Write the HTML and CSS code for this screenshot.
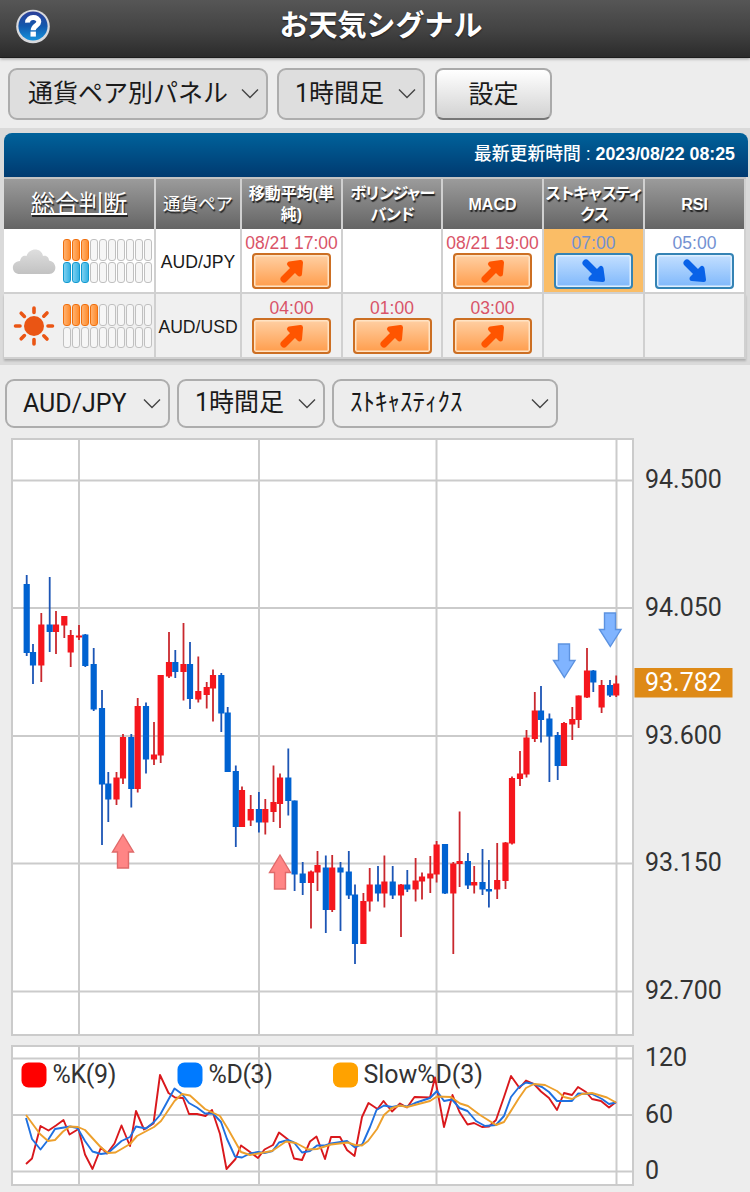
FILE: index.html
```
<!DOCTYPE html>
<html lang="ja">
<head>
    <meta charset="UTF-8">
    <meta name="viewport" content="width=device-width, initial-scale=1.0">
    <title>お天気シグナル</title>
    <link rel="stylesheet" href="styles.css">
</head>
<body>

    <!-- icons -->
    <svg class="defs" width="0" height="0">
        <defs>
            <linearGradient id="blueBall" x1="0" y1="0" x2="0" y2="1">
                <stop offset="0" stop-color="#2d3f98"/>
                <stop offset="0.5" stop-color="#1258ad"/>
                <stop offset="1" stop-color="#1693dc"/>
            </linearGradient>
            <linearGradient id="cloudFill" x1="0" y1="0" x2="0" y2="1">
                <stop offset="0" stop-color="#dedede"/>
                <stop offset="1" stop-color="#c2c2c2"/>
            </linearGradient>
            <symbol id="arrow" viewBox="0 0 24 24">
                <path d="M4 20 L15 9" fill="none" stroke="currentColor" stroke-width="7" stroke-linecap="round"/>
                <path d="M9.5 5 L20.5 3.5 L19.5 15 Z" fill="currentColor" stroke="currentColor" stroke-width="5" stroke-linejoin="round"/>
            </symbol>
        </defs>
    </svg>

    <header class="header">
        <svg class="help" width="36" height="36" viewBox="0 0 36 36">
            <circle cx="18" cy="18.5" r="16.8" fill="#d9dadd"/>
            <circle cx="18" cy="18" r="14.6" fill="url(#blueBall)"/>
            <path d="M12.6 14.6 C12.4 8 23.8 8 23.8 13.8 C23.8 17.4 18.2 17.6 18.2 22.2" fill="none" stroke="#fff" stroke-width="5"/>
            <rect x="15.5" y="23.6" width="5.4" height="5" fill="#fff"/>
        </svg>
        <h1>お天気シグナル</h1>
    </header>

    <div class="toolbar">
        <div class="select filled panel-type"><span>通貨ペア別パネル</span><svg class="chevron" viewBox="0 0 18 12"><path d="M1 1.5 L9 9.5 L17 1.5"/></svg></div>
        <div class="select filled period"><span>1時間足</span><svg class="chevron" viewBox="0 0 18 12"><path d="M1 1.5 L9 9.5 L17 1.5"/></svg></div>
        <button class="setting">設定</button>
    </div>

    <section class="panel">
        <div class="updated"><span>最新更新時間</span> : <b>2023/08/22 08:25</b></div>
        <div class="grid head">
            <div class="cell total">総合判断</div>
            <div class="cell pair-head">通貨ペア</div>
            <div class="cell">移動平均(単<br>純)</div>
            <div class="cell narrow">ボリンジャー<br>バンド</div>
            <div class="cell">MACD</div>
            <div class="cell narrow">ストキャスティ<br>クス</div>
            <div class="cell">RSI</div>
        </div>
        <div class="grid row">
            <div class="cell weather">
                <svg width="44" height="44" viewBox="0 0 44 44">
                    <path d="M8 35 C-1 35 -2 23 8 22 C9 17 12 16 14.5 17 C17 9 29 8 31 17 C35 16 37 19 37 21.5 C46 23 45 35 37 35 Z" fill="url(#cloudFill)"/>
                </svg>
                <div class="meter">
                    <div class="bars"><i class="up"></i><i class="up"></i><i class="up"></i><i></i><i></i><i></i><i></i><i></i><i></i><i></i></div>
                    <div class="bars"><i class="down"></i><i class="down"></i><i class="down"></i><i></i><i></i><i></i><i></i><i></i><i></i><i></i></div>
                </div>
            </div>
            <div class="cell pair">AUD/JPY</div>
            <div class="cell signal buy"><span>08/21 17:00</span><div class="sign"><svg><use href="#arrow"/></svg></div></div>
            <div class="cell"></div>
            <div class="cell signal buy"><span>08/21 19:00</span><div class="sign"><svg><use href="#arrow"/></svg></div></div>
            <div class="cell signal sell active"><span>07:00</span><div class="sign"><svg><use href="#arrow"/></svg></div></div>
            <div class="cell signal sell"><span>05:00</span><div class="sign"><svg><use href="#arrow"/></svg></div></div>
        </div>
        <div class="grid row even">
            <div class="cell weather">
                <svg width="44" height="44" viewBox="0 0 44 44">
                    <circle cx="22" cy="22" r="10" fill="#ea5514"/>
                    <path d="M22 4V8.5 M22 35.5V40 M3.5 22H8 M36 22H40.5 M9.2 9.2L12.4 12.4 M31.8 31.8L35 35 M9.2 34.8L12.4 31.6 M31.8 12.2L35 9" stroke="#ea5514" stroke-width="3.6" stroke-linecap="round"/>
                </svg>
                <div class="meter">
                    <div class="bars"><i class="up"></i><i class="up"></i><i class="up"></i><i class="up"></i><i></i><i></i><i></i><i></i><i></i><i></i></div>
                    <div class="bars"><i></i><i></i><i></i><i></i><i></i><i></i><i></i><i></i><i></i><i></i></div>
                </div>
            </div>
            <div class="cell pair">AUD/USD</div>
            <div class="cell signal buy"><span>04:00</span><div class="sign"><svg><use href="#arrow"/></svg></div></div>
            <div class="cell signal buy"><span>01:00</span><div class="sign"><svg><use href="#arrow"/></svg></div></div>
            <div class="cell signal buy"><span>03:00</span><div class="sign"><svg><use href="#arrow"/></svg></div></div>
            <div class="cell"></div>
            <div class="cell"></div>
        </div>
    </section>

    <div class="toolbar chart-bar">
        <div class="select pair-select"><span class="latin">AUD/JPY</span><svg class="chevron" viewBox="0 0 18 12"><path d="M1 1.5 L9 9.5 L17 1.5"/></svg></div>
        <div class="select period"><span>1時間足</span><svg class="chevron" viewBox="0 0 18 12"><path d="M1 1.5 L9 9.5 L17 1.5"/></svg></div>
        <div class="select kind"><span>ｽﾄｷｬｽﾃｨｸｽ</span><svg class="chevron" viewBox="0 0 18 12"><path d="M1 1.5 L9 9.5 L17 1.5"/></svg></div>
    </div>

    <!-- price chart -->
    <svg class="chart" width="750" height="600" viewBox="0 437 750 600">
        <rect class="frame" x="12" y="439" width="621" height="596"/>
        <path class="gridline" d="M12 480.5H633 M12 608H633 M12 736H633 M12 863.5H633 M12 991.5H633 M79 439V1035 M259 439V1035 M436.5 439V1035 M616.5 439V1035"/>
        <g id="candles"></g>
        <g class="mark buy-mark">
            <path d="M123 834.5L133.5 852H128.5V868H117.5V852H112.5Z"/>
            <path d="M280 855L290.5 872.5H285.5V889H274.5V872.5H269.5Z"/>
        </g>
        <g class="mark sell-mark">
            <path d="M558.5 644H569.5V660.5H575L564.3 677.5L553.5 660.5H558.5Z"/>
            <path d="M604.5 613H615.5V629.5H621L610.3 646.5L599.5 629.5H604.5Z"/>
        </g>
        <rect x="634.5" y="668" width="98" height="29.5" fill="#de8a17"/>
        <g class="axis">
            <text x="645" y="488">94.500</text>
            <text x="645" y="615.5">94.050</text>
            <text x="645" y="743.5">93.600</text>
            <text x="645" y="871">93.150</text>
            <text x="645" y="999">92.700</text>
            <text class="now" x="645" y="690.5">93.782</text>
        </g>
    </svg>

    <!-- stochastics -->
    <svg class="chart sub" width="750" height="155" viewBox="0 1037 750 155">
        <rect class="frame" x="12" y="1046" width="621" height="139"/>
        <path class="gridline" d="M12 1058.5H633 M12 1115H633 M12 1171.5H633 M79 1046V1185 M259 1046V1185 M436.5 1046V1185 M616.5 1046V1185"/>
        <rect x="21.5" y="1062.5" width="25" height="25" rx="7" fill="#f00"/>
        <rect x="177.5" y="1062.5" width="25" height="25" rx="7" fill="#007aff"/>
        <rect x="333" y="1062.5" width="25" height="25" rx="7" fill="#ffa200"/>
        <g class="axis">
            <text x="52.5" y="1082.5" textLength="64">%K(9)</text>
            <text x="208.5" y="1082.5" textLength="64.5">%D(3)</text>
            <text x="363.5" y="1082.5" textLength="119.5">Slow%D(3)</text>
        </g>
        <g id="lines"></g>
        <g class="axis">
            <text x="645" y="1066">120</text>
            <text x="645" y="1122.5">60</text>
            <text x="645" y="1179">0</text>
        </g>
    </svg>

    <script src="script.js"></script>
</body>
</html>
```
FILE: styles.css
```
* {
    box-sizing: border-box;
}

body {
    margin: 0;
    width: 750px;
    height: 1192px;
    overflow: hidden;
    background: #ededed;
    color: #1a1a1a;
    font-family: Roboto, "Noto Sans CJK JP", sans-serif;
}

.defs {
    display: block;
    height: 0;
}

/* header */
.header {
    position: relative;
    height: 58px;
    padding-top: 1px;
    background: linear-gradient(#565656, #424242 55%, #2b2b2b);
    border-bottom: 1px solid #1d1d1d;
    box-shadow: 0 1px 3px rgba(0, 0, 0, 0.35);
}

.header h1 {
    margin: 0;
    padding-left: 12px;
    text-align: center;
    color: #fff;
    font-size: 29px;
    line-height: 50px;
    font-weight: 700;
    text-shadow: 0 1px 2px rgba(0, 0, 0, 0.6);
}

.help {
    position: absolute;
    left: 15px;
    top: 8px;
}

/* select boxes and button */
.toolbar {
    display: flex;
    gap: 9px;
    height: 70px;
    padding: 10px 0 0 8px;
}

.select {
    display: flex;
    align-items: center;
    justify-content: space-between;
    height: 52px;
    padding: 0 7px 0 18px;
    border: 2px solid #adadad;
    border-radius: 9px;
    font-size: 25px;
    line-height: 36px;
    white-space: nowrap;
}

.filled {
    background: #dedede;
}

.panel-type {
    width: 260px;
}

.period {
    width: 148px;
    padding-left: 16px;
}

.chevron {
    width: 18px;
    height: 12px;
    fill: none;
    stroke: #444;
    stroke-width: 1.4;
}

.setting {
    width: 117px;
    height: 52px;
    margin-left: 1px;
    padding: 0 0 4px;
    border: 2px solid #aaa;
    border-bottom-color: #777;
    border-radius: 8px;
    background: linear-gradient(#fff, #d2d2d2);
    color: #1a1a1a;
    font-family: inherit;
    font-size: 25px;
}

/* signal table */
.panel {
    height: 237px;
    padding: 5px 2px 0 4px;
    background: #dadada;
    font-family: "Liberation Sans", "Noto Sans CJK JP", sans-serif;
}

.updated {
    height: 44px;
    padding-right: 13px;
    border-radius: 8px 8px 0 0;
    background: linear-gradient(#00629b, #003a70);
    color: #fff;
    text-align: right;
    font-size: 17.8px;
    line-height: 43px;
}

.updated span {
    font-weight: 500;
}

.grid {
    display: grid;
    grid-template-columns: 152px 86px 101px 100px 101px 101px 101px;
    grid-template-rows: 100%;
    width: 742px;
}

.cell {
    border-right: 2px solid #d0d0d0;
    border-bottom: 2px solid #d0d0d0;
    min-width: 0;
}

.head {
    height: 52px;
    border-top: 2px solid #c4c4c4;
    background: linear-gradient(#9b9b9b, #656565);
    color: #fff;
}

.head .cell {
    display: flex;
    align-items: center;
    justify-content: center;
    border-bottom: 0;
    text-align: center;
    white-space: nowrap;
    font-size: 16px;
    line-height: 21px;
    font-weight: 700;
    text-shadow: 1px 2px 1px #222;
}

.head .total {
    font-size: 24px;
    font-weight: 400;
    line-height: 30px;
    text-decoration: underline;
    text-decoration-thickness: 2px;
    text-underline-offset: 1px;
}

.head .pair-head {
    font-size: 17.5px;
    font-weight: 400;
}

.head .narrow {
    letter-spacing: -2px;
}

.row {
    height: 65px;
    background: #fff;
}

.even {
    background: #f0f0f0;
    box-shadow: 0 2px 2px rgba(0, 0, 0, 0.2);
}

.weather {
    display: flex;
    align-items: center;
    padding: 1px 0 0 8px;
}

.meter {
    display: grid;
    gap: 1px;
    margin-left: 7px;
}

.bars {
    display: flex;
    gap: 1px;
}

.bars i {
    width: 8px;
    height: 21.5px;
    border: 1.5px solid #c0c0c0;
    border-radius: 3px;
    background: #f6f6f6;
}

.bars .up {
    border-color: #f0700f;
    background: linear-gradient(to right, #ffb270, #ff8c2e);
}

.bars .down {
    border-color: #129ad0;
    background: linear-gradient(to right, #7ed0f0, #35b2e4);
}

.pair {
    padding-top: 1px;
    text-align: center;
    font-size: 17.6px;
    line-height: 64px;
    white-space: nowrap;
    overflow: hidden;
}

.signal {
    display: flex;
    flex-direction: column;
    align-items: center;
    padding-top: 4px;
    font-size: 17.5px;
    line-height: 20px;
    white-space: nowrap;
}

.sign {
    display: flex;
    align-items: center;
    justify-content: center;
    width: 79px;
    height: 36px;
    border: 2px solid #cc6f23;
    border-radius: 4px;
}

.sign svg {
    width: 24px;
    height: 24px;
}

.buy {
    color: #d95468;
}

.buy .sign {
    background: linear-gradient(#ffd0a4, #ff9d4c);
    box-shadow: inset 0 0 0 1.5px #ffe3c4;
    color: #ff5500;
}

.sell {
    color: #7391d2;
}

.sell .sign {
    border-color: #3483b4;
    background: linear-gradient(#c3dfff, #7fb8fb);
    box-shadow: inset 0 0 0 1.5px #deefff;
    color: #0962e8;
}

.sell svg {
    transform: rotate(90deg);
}

.active {
    background: #fabd66;
}

/* chart */
.chart-bar {
    gap: 7px;
    height: 72px;
    padding: 14px 0 0 5px;
}

.chart-bar .select {
    height: 49px;
}

.select span {
    padding-bottom: 1px;
}

.select .latin {
    padding: 1px 0 0;
}

.chart-bar .pair-select {
    width: 165px;
    padding-left: 16px;
}

.kind {
    width: 226px;
    padding-left: 16px;
}

.chart {
    display: block;
}

.frame {
    fill: #fff;
    stroke: #cbcbcb;
    stroke-width: 2;
}

.gridline {
    fill: none;
    stroke: #cbcbcb;
    stroke-width: 2;
}

.axis {
    fill: #333;
    font-family: Roboto, sans-serif;
    font-size: 25px;
}

.axis .now {
    fill: #fff;
}

.mark path {
    stroke-width: 1.4;
}

.buy-mark {
    fill: #ff8585;
    stroke: #e06a6a;
}

.sell-mark {
    fill: #80b4ff;
    stroke: #5c92e0;
}

#lines polyline {
    fill: none;
    stroke-width: 1.9;
    stroke-linejoin: round;
}
```
FILE: script.js
```
const NS = 'http://www.w3.org/2000/svg';

// x, high, body top, body bottom, low, 1 = up (red) / 0 = down (blue)
const candles = [
    [26.7,575,584,653,656,0],[33,644,652,665.5,684,0],[41.3,613,624.5,665.5,682,1],[49.7,577,624.5,632,652,0],
    [56,611,624.5,632,654,1],[64.3,616,616,625.5,638,1],[70.7,630,635,652.5,667,1],[79,625,635.5,637.5,640,1],
    [85.3,634,634.5,666,667,0],[93.7,648,664,709.5,711,0],[102,690,708,784.5,845,0],[108.3,772,783.5,799.5,822,0],
    [116.5,772,777.5,799.5,805,1],[123,734,737,778.5,784,1],[131.3,734,737,789,807.5,0],[137.7,698,706,789,792.5,1],
    [146,702.5,706,759.5,773.5,0],[154,722,754.5,759.5,765,1],[160.7,675,675,755.5,763,1],[169,632,662,676.5,678,1],
    [175.3,650,662,672,678,0],[183.5,623,664,672,700.5,1],[190,642,664,699,709,0],[198.3,656.5,691,699.5,702.5,1],
    [206.7,682,687,695,708.5,1],[213,669.5,675,688.5,721.5,1],[221.3,673,675,713.5,732,0],[227.7,707,712.5,772,772,0],
    [235.8,765.5,771,827,847,0],[242,786.5,790,827,827,1],[250.7,795,809,820.5,826,1],[258.9,792,809,822.5,832.5,0],
    [265.3,799,809,822.5,834.5,1],[273.5,765.5,802,812,822,1],[280,773.5,777.5,804,828,1],[288.3,748.5,777.5,801,815.5,0],
    [294.6,800.5,800.5,874.5,891,0],[302.7,862,873.5,883,895,0],[311,870.5,871.5,883,928.5,1],[317.5,851,865,872.5,891,1],
    [325.8,855.5,867.5,910,933,0],[332.2,855,867.5,910,912,1],[340.5,862,867.5,872.5,931,0],[348.8,851,871.5,895.5,899,0],
    [355,884.5,894.5,944,964,0],[363.4,893,901,944,944,1],[369.7,868,884.5,901.5,911.5,1],[378,866,884.5,893.5,901.5,0],
    [384.4,855.5,881.5,893.5,907.5,1],[392.7,866,881.5,895.5,899,0],[401,884,884.5,895.5,937,1],[407.3,870,884.5,889.5,892,0],
    [415.6,858,880.5,889.5,901.5,1],[422,872.5,876.5,881.5,899.5,1],[430.3,856,873.5,878.5,893,1],[436.6,841,844.5,874.5,882.5,1],
    [445,844,844,893.5,894,0],[453.3,862,863.5,893.5,954,1],[459.6,811.5,861,864,887,1],[467.9,853,861,885.5,889,0],
    [474.2,866,882,885.5,893.5,1],[482.5,849,882,889.5,895,0],[488.9,860,889,891.5,907.5,0],[497.2,843,880,889.5,899,1],
    [505.5,842,842.5,881,889,1],[512,776.5,778,843.5,844.5,1],[520,751,773.5,779,786,1],[526.5,730,737.5,774.5,777.5,1],
    [534.8,692,710.5,739,742,1],[541,686,710.5,720,742.5,0],[549.4,713.5,718.5,736.5,782,0],[557.7,732,735,766,780,0],
    [564,722,723,766,766,1],[572.3,707,719,724.5,740,1],[578.6,695.5,695.5,720,728,1],[587,648,670.5,697.5,698,1],
    [593.3,670,670.5,682.5,692,0],[601.6,680,685,707.5,713,1],[610,680,685,695.5,697,0],[616.2,675.5,683.5,695.5,697,1]
];

const series = [
    ['#d9181c', '26,1164 32,1158.5 40.5,1126 48.5,1130.5 56,1125.5 63.5,1120 69.5,1134.5 78.5,1129 85,1154.5 92.5,1169 101,1147.5 107,1153.5 114.5,1143.5 121.5,1125.5 130,1146 136,1111 144,1129.5 153.5,1123.5 160,1075 168.5,1093 175,1097.5 183,1098 189,1114 197,1114 205.5,1116 212,1110 220,1134 226.5,1169 235.5,1159 241,1145.5 250,1152 258,1158 264.5,1149.5 273,1145 279,1132.5 288,1139.5 294,1158.5 302,1160 310,1141.5 316.5,1136.5 325,1159 331,1137 340,1137 347,1150 354.5,1156 362,1117 368.5,1103 377.5,1109 383.5,1101 392,1111.5 400,1103.5 407,1107.5 414.5,1097 430,1097.5 435,1077.5 444,1127 452.5,1095 459.5,1112 467.5,1124.5 474,1123 482,1127 489,1126.5 496,1120 504,1097 511,1076 519.5,1088 526,1080.5 534,1084 541,1091.5 549,1098 557,1110 564,1093 572,1095 578,1087 586,1092 592,1099 601,1101 609,1107.5 616,1102'],
    ['#1f70e0', '26,1118 32,1139 40.5,1149.5 48,1140 55,1129 70,1126.5 77.5,1128 85,1141 92.5,1151.5 101,1154 108,1153 121.5,1141 130,1137 136,1126.5 146,1128.5 154,1122 160,1115 174.5,1088.5 182,1094 189,1103 197,1107.5 205,1113.5 213,1113.5 221,1122 227,1139 235,1156.5 242,1157.5 250,1153.5 258,1152 264.5,1153 272.5,1151 279,1142.5 288,1140 294,1142.5 302,1152.5 310,1151 317,1145.5 325,1145.5 331,1143.5 347,1141 355,1147.5 362.5,1144 370,1127 376.5,1110 384,1105.5 392,1107 400,1105.5 407,1106.5 415,1103 430,1098 437,1091 444,1101 452,1099.5 459.5,1108 467.5,1111 476,1121 485,1126 496,1125 504,1116 511,1097 519,1087 526,1082.5 534,1084 542,1087 549,1092 557,1101 572,1101 578,1093.5 592,1094 602,1099 609,1104 616,1102.5'],
    ['#eda02c', '26,1115 40,1134 48,1141 55,1140 63,1131.5 70,1126.5 78,1127 85,1130 101,1147.5 108,1153 115.5,1152.5 130,1144 137,1136 154,1127 161,1121 174.5,1101 182,1094 190,1095.5 205,1109 220,1116 228,1129 241,1152 250,1155 272,1151 286,1141.5 296,1143 308,1149.5 317,1149 331,1144.5 348,1142.5 355,1145 362,1145.5 368,1141 377,1129 384,1115 392,1108 400,1105.5 407,1107 430,1101 437,1096.5 451,1097 460,1103.5 468,1106 480,1115 496,1125 504,1122 519,1098 526,1088 534,1084 545,1085 557,1091 564,1097 572,1099 582,1094 592,1093 607,1097.5 616,1102.5']
];

function add(parent, name, attrs) {
    const el = document.createElementNS(NS, name);
    for (const key in attrs) {
        el.setAttribute(key, attrs[key]);
    }
    parent.appendChild(el);
}

const candleGroup = document.getElementById('candles');
for (const [x, high, top, bottom, low, up] of candles) {
    add(candleGroup, 'rect', { x: x - 0.9, y: high, width: 1.8, height: low - high, fill: up ? '#c9282e' : '#1c55b5' });
    add(candleGroup, 'rect', { x: x - 3.1, y: top, width: 6.2, height: bottom - top, fill: up ? '#f5161d' : '#0062d1' });
}

const lineGroup = document.getElementById('lines');
for (const [color, points] of series) {
    add(lineGroup, 'polyline', { points: points, stroke: color });
}
```
